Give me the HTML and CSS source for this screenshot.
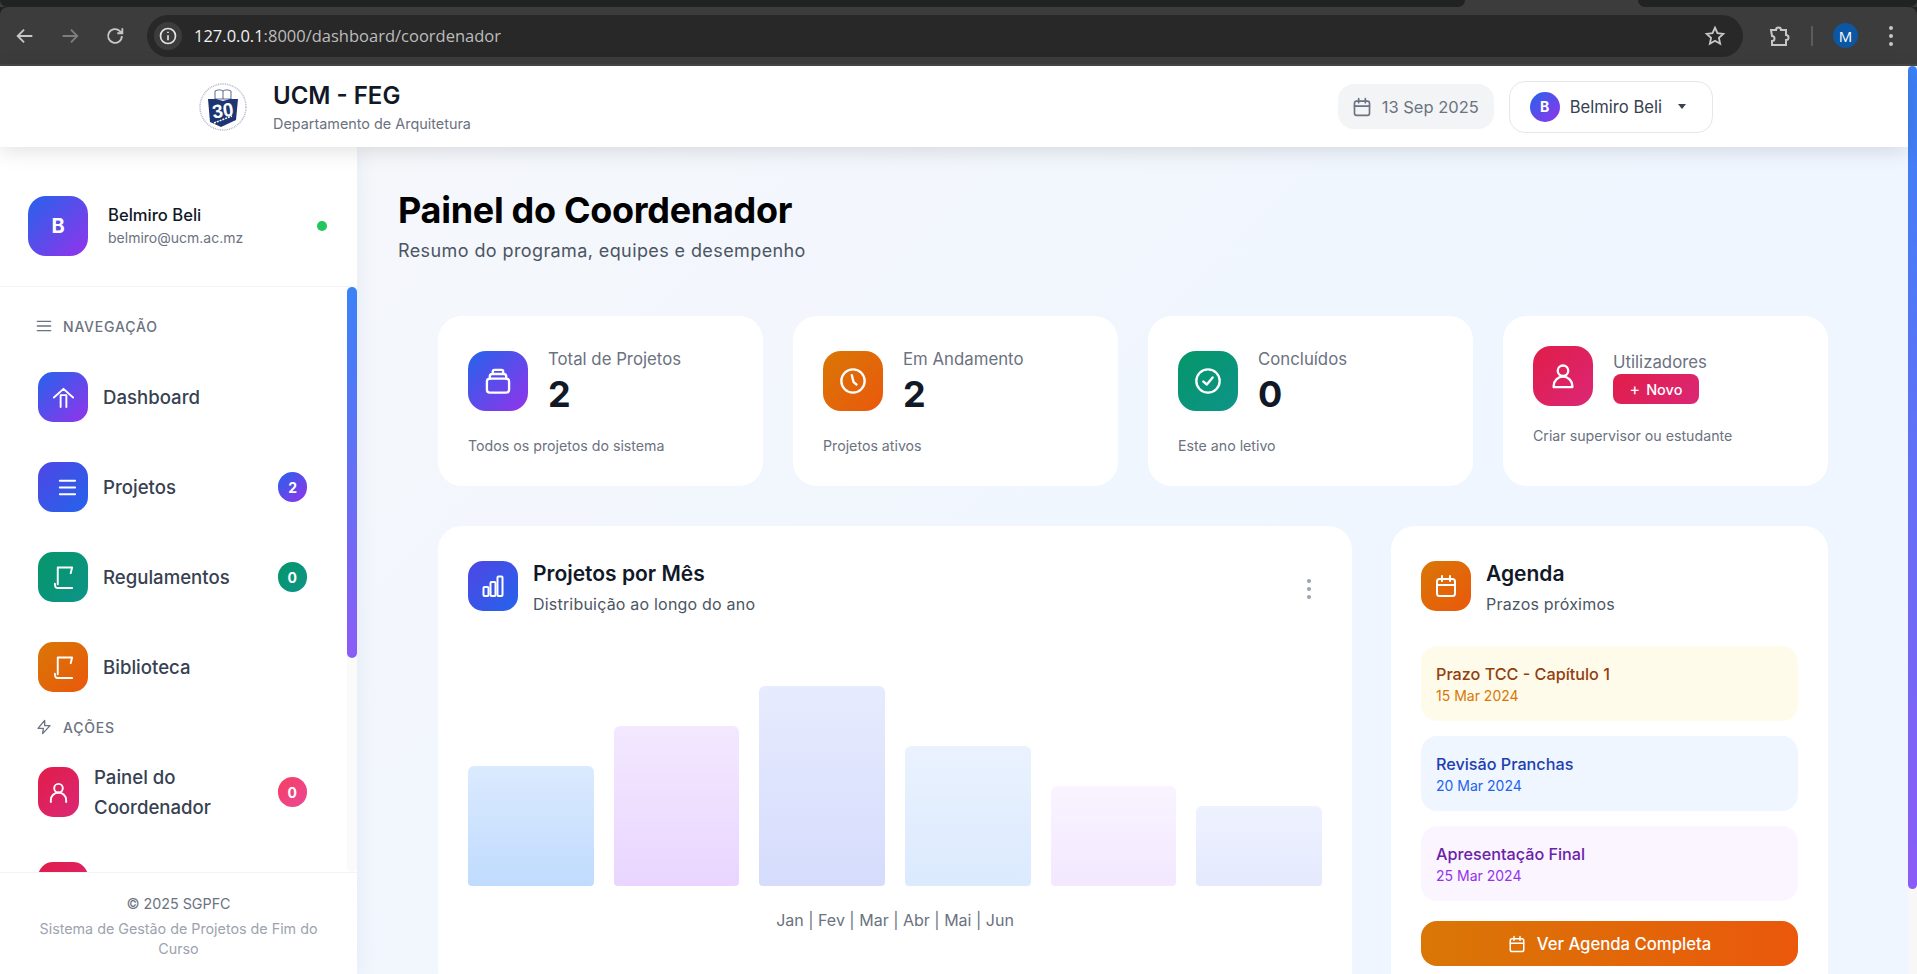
FILE: index.html
```html
<!DOCTYPE html>
<html lang="pt">

<head>
    <meta charset="UTF-8">
    <meta name="viewport" content="width=device-width, initial-scale=1.0">
    <title>Painel do Coordenador</title>
    <link rel="stylesheet" href="styles.css">
</head>

<body>
    <svg class="sprite" aria-hidden="true">
        <symbol id="i-calendar" viewBox="0 0 24 24"><rect x="3" y="5" width="18" height="17" rx="2.5" /><path d="M8 2v5M16 2v5M3 11h18" /></symbol>
        <symbol id="i-user" viewBox="0 0 24 24"><circle cx="12" cy="7.5" r="4.5" /><path d="M4 21.5v-1a8 8 0 0 1 16 0v1z" /></symbol>
        <symbol id="i-book" viewBox="0 0 24 24"><path d="M6 1.500h15l-1.500 6M6 1.500V19M3 18.500c0 3 1 4.500 3 4.500h15" /></symbol>
    </svg>

    <div class="browser-bar">
        <div class="tab-strip">
            <div class="tab-dark tab-dark-left"></div>
            <div class="tab-dark tab-dark-right"></div>
        </div>
        <div class="toolbar">
            <svg class="tool-icon" viewBox="0 0 24 24"><path d="M20 12H5M11 5l-7 7 7 7" /></svg>
            <svg class="tool-icon tool-icon-off" viewBox="0 0 24 24"><path d="M4 12h15M13 5l7 7-7 7" /></svg>
            <svg class="tool-icon" viewBox="0 0 24 24"><path d="M19.500 12a7.500 7.500 0 1 1-2.200-5.300L20 9M20 3.500V9h-5.500" /></svg>
            <div class="omnibox">
                <span class="site-info">
                    <svg viewBox="0 0 24 24"><circle cx="12" cy="12" r="9" /><path d="M12 11v6M12 7v1.500" /></svg>
                </span>
                <span class="url"><span class="url-host">127.0.0.1</span>:8000/dashboard/coordenador</span>
                <svg class="tool-icon star" viewBox="0 0 24 24"><path d="M12 3l2.700 6 6.300.7-4.700 4.300 1.300 6.500-5.600-3.300-5.600 3.300 1.300-6.500L3 9.700 9.300 9z" /></svg>
            </div>
            <svg class="tool-icon ext" viewBox="0 0 24 24"><path d="M4 6h5a2.500 2.500 0 0 1 5 0h5v5a2.500 2.500 0 0 1 0 5v5H5v-4a2 2 0 0 0 0-5z" /></svg>
            <span class="tool-divider"></span>
            <span class="profile">M</span>
            <span class="tool-kebab"><i></i><i></i><i></i></span>
        </div>
    </div>

    <div class="viewport">
        <div class="app">
            <header class="topbar">
                <div class="brand">
                    <svg class="logo" viewBox="0 0 48 50">
                        <circle class="logo-ring" cx="24" cy="25" r="23" />
                        <path class="logo-book" d="M16 9c3-1.500 6-1.500 8 0 2-1.500 5-1.500 8 0v8H16zM24 9v8" />
                        <path class="logo-shield" d="M9 17h8l7 2 7-2h8l-2 21-15 7-11-5z" />
                        <text class="logo-num" x="24" y="35" text-anchor="middle" transform="rotate(-8 24 30)">30</text>
                        <path class="logo-band" d="M15 41l18-7" />
                    </svg>
                    <div class="brand-text">
                        <div class="brand-title">UCM - FEG</div>
                        <div class="brand-sub">Departamento de Arquitetura</div>
                    </div>
                </div>
                <div class="topbar-right">
                    <div class="date-pill">
                        <svg class="line-icon date-icon"><use href="#i-calendar" /></svg>
                        <span>13 Sep 2025</span>
                    </div>
                    <div class="user-btn">
                        <span class="user-btn-avatar">B</span>
                        <span>Belmiro Beli</span>
                        <span class="caret"></span>
                    </div>
                </div>
            </header>

            <div class="layout">
                <aside class="sidebar">
                    <div class="side-user">
                        <div class="side-avatar">B</div>
                        <div>
                            <div class="side-name">Belmiro Beli</div>
                            <div class="side-mail">belmiro@ucm.ac.mz</div>
                        </div>
                        <span class="online-dot"></span>
                    </div>

                    <div class="side-scroll">
                        <nav class="side-nav">
                            <div class="nav-label">
                                <svg class="line-icon" viewBox="0 0 24 24"><path d="M2 5h20M2 12h20M2 19h20" /></svg>
                                <span>Navegação</span>
                            </div>
                            <a class="nav-item">
                                <span class="nav-icon grad-brand">
                                    <svg class="line-icon" viewBox="0 0 24 24"><path d="M2 12L12 3l10 9M9 9.500V22M15 9.500V22M9 9.500h6" /></svg>
                                </span>
                                <span class="nav-text">Dashboard</span>
                            </a>
                            <a class="nav-item">
                                <span class="nav-icon grad-indigo">
                                    <svg class="line-icon nudge" viewBox="0 0 24 24"><path d="M5 5h16M5 12h16M5 19h16" /></svg>
                                </span>
                                <span class="nav-text">Projetos</span>
                                <span class="nav-badge grad-brand">2</span>
                            </a>
                            <a class="nav-item">
                                <span class="nav-icon grad-green">
                                    <svg class="line-icon"><use href="#i-book" /></svg>
                                </span>
                                <span class="nav-text">Regulamentos</span>
                                <span class="nav-badge grad-green">0</span>
                            </a>
                            <a class="nav-item">
                                <span class="nav-icon grad-orange">
                                    <svg class="line-icon"><use href="#i-book" /></svg>
                                </span>
                                <span class="nav-text">Biblioteca</span>
                            </a>

                            <div class="nav-label nav-label-actions">
                                <svg class="line-icon" viewBox="0 0 24 24"><path d="M13 2L3 14h8l-1 8 11-12h-8z" /></svg>
                                <span>Ações</span>
                            </div>
                            <a class="nav-item nav-item-tall">
                                <span class="nav-icon nav-icon-narrow grad-pink">
                                    <svg class="line-icon" viewBox="0 0 24 24"><circle cx="12" cy="7.500" r="4.500" /><path d="M4 22v-2a8 8 0 0 1 16 0v2" /></svg>
                                </span>
                                <span class="nav-text">Painel do Coordenador</span>
                                <span class="nav-badge grad-rose">0</span>
                            </a>
                            <a class="nav-item">
                                <span class="nav-icon grad-pink"></span>
                            </a>
                        </nav>
                        <div class="side-track"><div class="side-thumb"></div></div>
                    </div>

                    <footer class="side-footer">
                        <div class="side-copy">© 2025 SGPFC</div>
                        <div class="side-system">Sistema de Gestão de Projetos de Fim do Curso</div>
                    </footer>
                </aside>

                <main class="main">
                    <h1 class="page-title">Painel do Coordenador</h1>
                    <p class="page-sub">Resumo do programa, equipes e desempenho</p>

                    <section class="stats">
                        <div class="stat-card">
                            <div class="stat-head">
                                <span class="stat-icon grad-brand">
                                    <svg class="line-icon" viewBox="0 0 24 24"><rect x="2.500" y="10" width="19" height="12" rx="2.500" /><path d="M5 10V8a2 2 0 0 1 2-2h10a2 2 0 0 1 2 2v2M7.500 6V4a1.500 1.500 0 0 1 1.500-1.500h6A1.500 1.500 0 0 1 16.500 4v2" /></svg>
                                </span>
                                <div class="stat-body">
                                    <div class="stat-label">Total de Projetos</div>
                                    <div class="stat-num">2</div>
                                </div>
                            </div>
                            <div class="stat-note">Todos os projetos do sistema</div>
                        </div>
                        <div class="stat-card">
                            <div class="stat-head">
                                <span class="stat-icon grad-orange">
                                    <svg class="line-icon" viewBox="0 0 24 24"><circle cx="12" cy="12" r="10" /><path d="M11 7l1.500 6 2.500 2" /></svg>
                                </span>
                                <div class="stat-body">
                                    <div class="stat-label">Em Andamento</div>
                                    <div class="stat-num">2</div>
                                </div>
                            </div>
                            <div class="stat-note">Projetos ativos</div>
                        </div>
                        <div class="stat-card">
                            <div class="stat-head">
                                <span class="stat-icon grad-green">
                                    <svg class="line-icon" viewBox="0 0 24 24"><circle cx="12" cy="12" r="10" /><path d="M8 12.500l3 2.500 5-6" /></svg>
                                </span>
                                <div class="stat-body">
                                    <div class="stat-label">Concluídos</div>
                                    <div class="stat-num">0</div>
                                </div>
                            </div>
                            <div class="stat-note">Este ano letivo</div>
                        </div>
                        <div class="stat-card">
                            <div class="stat-head stat-head-action">
                                <span class="stat-icon grad-pink">
                                    <svg class="line-icon"><use href="#i-user" /></svg>
                                </span>
                                <div class="stat-body">
                                    <div class="stat-label">Utilizadores</div>
                                    <a class="new-btn"><span class="new-plus">+</span> Novo</a>
                                </div>
                            </div>
                            <div class="stat-note">Criar supervisor ou estudante</div>
                        </div>
                    </section>

                    <section class="panels">
                        <div class="panel">
                            <div class="panel-head">
                                <span class="panel-icon grad-indigo">
                                    <svg class="line-icon" viewBox="0 0 24 24"><rect x="2.500" y="13" width="5" height="9" rx="1" /><rect x="9.500" y="8" width="5" height="14" rx="1" /><rect x="16.500" y="2.500" width="5" height="19.500" rx="1" /></svg>
                                </span>
                                <div>
                                    <h3 class="panel-title">Projetos por Mês</h3>
                                    <div class="panel-sub">Distribuição ao longo do ano</div>
                                </div>
                                <span class="panel-kebab"><i></i><i></i><i></i></span>
                            </div>
                            <div class="bars">
                                <div class="bar bar-1" style="height: 120px"></div>
                                <div class="bar bar-2" style="height: 160px"></div>
                                <div class="bar bar-3" style="height: 200px"></div>
                                <div class="bar bar-4" style="height: 140px"></div>
                                <div class="bar bar-5" style="height: 100px"></div>
                                <div class="bar bar-6" style="height: 80px"></div>
                            </div>
                            <div class="bar-months">Jan | Fev | Mar | Abr | Mai | Jun</div>
                        </div>

                        <div class="panel">
                            <div class="panel-head">
                                <span class="panel-icon grad-orange">
                                    <svg class="line-icon"><use href="#i-calendar" /></svg>
                                </span>
                                <div>
                                    <h3 class="panel-title">Agenda</h3>
                                    <div class="panel-sub">Prazos próximos</div>
                                </div>
                            </div>
                            <div class="agenda">
                                <div class="agenda-item agenda-amber">
                                    <div class="agenda-title">Prazo TCC - Capítulo 1</div>
                                    <div class="agenda-date">15 Mar 2024</div>
                                </div>
                                <div class="agenda-item agenda-blue">
                                    <div class="agenda-title">Revisão Pranchas</div>
                                    <div class="agenda-date">20 Mar 2024</div>
                                </div>
                                <div class="agenda-item agenda-purple">
                                    <div class="agenda-title">Apresentação Final</div>
                                    <div class="agenda-date">25 Mar 2024</div>
                                </div>
                            </div>
                            <a class="agenda-btn">
                                <svg class="line-icon"><use href="#i-calendar" /></svg>
                                Ver Agenda Completa
                            </a>
                        </div>
                    </section>
                </main>
            </div>
        </div>

        <div class="page-track"><div class="page-thumb"></div></div>
    </div>
</body>

</html>
```

FILE: styles.css
```css
* {
    box-sizing: border-box;
}

html,
body {
    height: 974px;
    margin: 0;
    overflow: hidden;
}

body {
    font-family: Inter, 'Noto Sans', sans-serif;
    color: #111827;
    background: #fff;
}

.sprite {
    display: none;
}

.line-icon {
    fill: none;
    stroke: #fff;
    stroke-width: 2;
    stroke-linecap: round;
    stroke-linejoin: round;
}

/* browser window */

.browser-bar {
    height: 66px;
    background: #202124;
    font-family: 'Open Sans', sans-serif;
}

.tab-strip {
    height: 7px;
    background: #3c3c3c;
    display: flex;
    justify-content: space-between;
}

.tab-dark {
    height: 7px;
    background: #202322;
    border-radius: 0 0 8px 8px;
}

.tab-dark-left {
    width: 1465px;
}

.tab-dark-right {
    width: 279px;
}

.toolbar {
    height: 59px;
    background: #3c3c3c;
    border-bottom: 2px solid #474747;
    border-radius: 8px 8px 0 0;
    display: flex;
    align-items: center;
    padding-left: 14px;
}

.tool-icon {
    width: 22px;
    height: 22px;
    margin-right: 23px;
    flex: none;
    fill: none;
    stroke: #c7c7c7;
    stroke-width: 2;
}

.tool-icon-off {
    stroke: #7d7d7d;
}

.omnibox {
    width: 1596px;
    height: 42px;
    margin-left: -2px;
    border-radius: 21px;
    background: #282828;
    display: flex;
    align-items: center;
    padding-left: 7px;
    flex: none;
}

.site-info {
    width: 28px;
    height: 28px;
    border-radius: 50%;
    background: #3c3c3c;
    display: flex;
    align-items: center;
    justify-content: center;
}

.site-info svg {
    width: 20px;
    height: 20px;
    fill: none;
    stroke: #e3e3e3;
    stroke-width: 2;
}

.url {
    margin-left: 12px;
    flex: 1;
    font-size: 16.5px;
    color: #bdbdbd;
}

.url-host {
    color: #f0f0f0;
}

.star {
    margin-right: 17px;
}

.ext {
    margin: 0 0 0 24px;
    width: 24px;
    height: 24px;
}

.tool-divider {
    width: 2px;
    height: 20px;
    margin-left: 20px;
    background: #5c5c5c;
}

.profile {
    width: 25px;
    height: 25px;
    margin-left: 20px;
    border-radius: 50%;
    background: #0b57a4;
    color: #fff;
    font-size: 15px;
    display: flex;
    align-items: center;
    justify-content: center;
}

.tool-kebab {
    margin-left: 31px;
    display: flex;
    flex-direction: column;
    gap: 4px;
}

.tool-kebab i {
    width: 4px;
    height: 4px;
    border-radius: 50%;
    background: #c7c7c7;
}

/* page shell */

.viewport {
    height: 908px;
    display: flex;
}

.app {
    flex: 1;
    min-width: 0;
    display: flex;
    flex-direction: column;
}

.page-track {
    width: 9px;
    background: #f7f7f7;
}

.page-thumb {
    height: 823px;
    background: linear-gradient(180deg, #3b82f6, #8b5cf6);
    border-radius: 5px;
}

.topbar {
    height: 81px;
    flex: none;
    background: #fff;
    box-shadow: 0 4px 20px rgba(0, 0, 0, 0.12);
    position: relative;
    z-index: 2;
    display: flex;
    align-items: center;
    justify-content: space-between;
    padding: 0 195px 0 199px;
}

.brand {
    display: flex;
    align-items: center;
    gap: 26px;
}

.brand-text {
    padding-top: 2px;
}

.logo {
    width: 48px;
    height: 50px;
}

.logo-ring {
    fill: none;
    stroke: #b4bccd;
    stroke-width: 1.500;
    stroke-dasharray: 1 0.800;
}

.logo-book {
    fill: #fff;
    stroke: #33457a;
    stroke-width: 0.800;
}

.logo-shield {
    fill: #1e3574;
}

.logo-num {
    font-family: 'Liberation Sans', sans-serif;
    font-size: 19px;
    font-weight: 700;
    fill: #fff;
}

.logo-band {
    stroke: #fff;
    stroke-width: 1.500;
    stroke-dasharray: 2 1;
}

.brand-title {
    font-size: 24px;
    font-weight: 600;
    line-height: 30px;
}

.brand-sub {
    font-size: 14.4px;
    line-height: 20px;
    margin-top: 3px;
    color: #6b7280;
}

.topbar-right {
    display: flex;
    align-items: center;
    gap: 15px;
}

.date-pill {
    height: 45px;
    padding: 0 15px 0 14px;
    display: flex;
    align-items: center;
    gap: 10px;
    border-radius: 16px;
    background: #f3f4f6;
    font-size: 16.5px;
    color: #6b7280;
}

.date-icon {
    width: 20px;
    height: 20px;
    stroke: #6b7280;
}

.user-btn {
    height: 52px;
    padding: 0 26px 0 20px;
    display: flex;
    align-items: center;
    gap: 10px;
    border: 1px solid #e5e7eb;
    border-radius: 16px;
    font-size: 16.6px;
    color: #374151;
}

.user-btn-avatar {
    width: 30px;
    height: 30px;
    border-radius: 50%;
    background: linear-gradient(135deg, #2563eb, #9333ea);
    color: #fff;
    font-size: 14px;
    font-weight: 700;
    display: flex;
    align-items: center;
    justify-content: center;
}

.caret {
    margin-left: 6px;
    border-top: 5px solid #374151;
    border-left: 4px solid transparent;
    border-right: 4px solid transparent;
}

.layout {
    flex: 1;
    min-height: 0;
    display: flex;
}

/* gradients shared by icons and badges */

.grad-brand {
    background: linear-gradient(135deg, #2563eb, #9333ea);
}

.grad-indigo {
    background: linear-gradient(135deg, #4f46e5, #2563eb);
}

.grad-green {
    background: linear-gradient(135deg, #059669, #0d9488);
}

.grad-orange {
    background: linear-gradient(135deg, #d97706, #ea580c);
}

.grad-pink {
    background: linear-gradient(135deg, #e11d48, #db2777);
}

.grad-rose {
    background: linear-gradient(135deg, #f43f5e, #ec4899);
}

/* sidebar */

.sidebar {
    width: 357px;
    flex: none;
    background: #fff;
    box-shadow: 0 0 20px rgba(37, 70, 140, 0.08);
    position: relative;
    z-index: 1;
    display: flex;
    flex-direction: column;
}

.side-user {
    flex: none;
    padding: 49px 30px 30px 28px;
    border-bottom: 1px solid #f3f4f6;
    display: flex;
    align-items: center;
    gap: 20px;
}

.side-avatar {
    width: 60px;
    height: 60px;
    border-radius: 18px;
    background: linear-gradient(135deg, #2563eb, #9333ea);
    color: #fff;
    font-size: 20px;
    font-weight: 700;
    display: flex;
    align-items: center;
    justify-content: center;
}

.side-name {
    font-size: 16.6px;
    font-weight: 500;
    line-height: 22px;
}

.side-mail {
    font-size: 14px;
    line-height: 20px;
    margin-top: 2px;
    color: #6b7280;
}

.online-dot {
    width: 10px;
    height: 10px;
    margin-left: auto;
    border-radius: 50%;
    background: #22c55e;
}

.side-scroll {
    flex: 1;
    min-height: 0;
    display: flex;
    overflow: hidden;
}

.side-nav {
    flex: 1;
    padding: 29px 40px 0 36px;
}

.nav-label {
    height: 20px;
    margin-bottom: 36px;
    display: flex;
    align-items: center;
    gap: 11px;
    font-size: 14px;
    font-weight: 500;
    letter-spacing: 0.8px;
    text-transform: uppercase;
    color: #6b7280;
}

.nav-label svg {
    width: 16px;
    height: 16px;
    stroke: #6b7280;
}

.nav-label-actions {
    margin-top: -15px;
    margin-bottom: 25px;
}

.nav-item {
    min-height: 50px;
    margin: 0 0 40px 2px;
    display: flex;
    align-items: center;
    gap: 15px;
}

.nav-item-tall {
    height: 60px;
}

.nav-icon {
    width: 50px;
    height: 50px;
    flex: none;
    border-radius: 15px;
    display: flex;
    align-items: center;
    justify-content: center;
}

.nav-icon svg {
    width: 23px;
    height: 23px;
}

.nav-icon .nudge {
    margin-left: 6px;
}

.nav-icon-narrow {
    width: 41px;
}

.nav-text {
    flex: 1;
    font-size: 18.6px;
    font-weight: 500;
    line-height: 30px;
    color: #374151;
}

.nav-badge {
    height: 30px;
    min-width: 28px;
    padding: 0 10px;
    border-radius: 15px;
    color: #fff;
    font-size: 14px;
    font-weight: 700;
    display: flex;
    align-items: center;
    justify-content: center;
}

.side-track {
    width: 10px;
    flex: none;
    background: #fafafa;
    border-radius: 0 0 6px 6px;
}

.side-thumb {
    height: 371px;
    background: linear-gradient(180deg, #3b82f6, #8b5cf6);
    border-radius: 5px;
}

.side-footer {
    height: 102px;
    flex: none;
    padding: 21px 30px 0 30px;
    border-top: 1px solid #f3f4f6;
    text-align: center;
    font-size: 14.3px;
    line-height: 20px;
}

.side-copy {
    color: #6b7280;
}

.side-system {
    margin-top: 5px;
    color: #9ca3af;
}

/* main */

.main {
    flex: 1;
    min-width: 0;
    overflow: hidden;
    padding: 41px 40px 0 41px;
    background: linear-gradient(135deg, #f5f7fb, #eff6ff 60%);
}

.page-title {
    margin: 0;
    font-size: 36px;
    font-weight: 700;
    line-height: 44px;
    letter-spacing: -0.3px;
    color: #000;
}

.page-sub {
    margin: 5px 0 51px;
    font-size: 18px;
    line-height: 28px;
    letter-spacing: 0.4px;
    color: #4b5563;
}

.stats {
    margin: 0 40px 40px;
    display: grid;
    grid-template-columns: repeat(4, 1fr);
    gap: 30px;
}

.stat-card {
    height: 170px;
    padding: 30px;
    border-radius: 24px;
    background: #fff;
}

.stat-head {
    padding-top: 5px;
    margin-bottom: 22px;
    display: flex;
    gap: 20px;
}

.stat-head-action {
    padding-top: 0;
    margin-bottom: 20px;
}

.stat-head-action .stat-body {
    margin-top: 6px;
}

.stat-icon {
    width: 60px;
    height: 60px;
    flex: none;
    border-radius: 18px;
    display: flex;
    align-items: center;
    justify-content: center;
}

.stat-icon svg {
    width: 28px;
    height: 28px;
}

.stat-body {
    margin-top: -2px;
}

.stat-label {
    font-size: 16.8px;
    line-height: 20px;
    color: #6b7280;
}

.stat-num {
    margin-top: 5px;
    font-size: 36px;
    font-weight: 700;
    line-height: 40px;
}

.stat-note {
    font-size: 14.2px;
    line-height: 20px;
    color: #6b7280;
}

.new-btn {
    width: 86px;
    height: 30px;
    margin-top: 2px;
    border-radius: 8px;
    background: linear-gradient(135deg, #e11d48, #db2777);
    color: #fff;
    font-size: 14.5px;
    font-weight: 500;
    display: flex;
    align-items: center;
    justify-content: center;
    gap: 6px;
}

.new-plus {
    font-weight: 400;
    font-size: 16px;
}

.panels {
    margin: 0 40px;
    display: grid;
    grid-template-columns: 1fr 437px;
    gap: 39px;
}

.panel {
    height: 500px;
    padding: 35px 30px;
    border-radius: 24px;
    background: #fff;
}

.panel-head {
    display: flex;
    gap: 15px;
}

.panel-icon {
    width: 50px;
    height: 50px;
    flex: none;
    border-radius: 15px;
    display: flex;
    align-items: center;
    justify-content: center;
}

.panel-icon svg {
    width: 24px;
    height: 24px;
}

.panel-title {
    margin: 0;
    font-size: 21px;
    font-weight: 600;
    line-height: 26px;
}

.panel-sub {
    margin-top: 5px;
    font-size: 16px;
    line-height: 24px;
    letter-spacing: 0.2px;
    color: #4b5563;
}

.panel-kebab {
    margin: 18px 11px 0 auto;
    display: flex;
    flex-direction: column;
    gap: 4px;
}

.panel-kebab i {
    width: 4px;
    height: 4px;
    border-radius: 50%;
    background: #9ca3af;
}

.bars {
    height: 200px;
    margin-top: 70px;
    display: flex;
    align-items: flex-end;
    gap: 20px;
}

.bar {
    flex: 1;
    border-radius: 6px 6px 4px 4px;
}

.bar-1 {
    background: linear-gradient(180deg, #dbeafe, #bfdbfe);
}

.bar-2 {
    background: linear-gradient(180deg, #f3e8ff, #e9d5ff);
}

.bar-3 {
    background: linear-gradient(180deg, #e7ebfe, #d5dcfc);
}

.bar-4 {
    background: linear-gradient(180deg, #eaf2fe, #dbeafe);
}

.bar-5 {
    background: linear-gradient(180deg, #f9f4ff, #f3e8ff);
}

.bar-6 {
    background: linear-gradient(180deg, #eef2ff, #e4e9fd);
}

.bar-months {
    margin-top: 22px;
    text-align: center;
    font-size: 16px;
    line-height: 24px;
    color: #6b7280;
}

.agenda {
    margin-top: 30px;
    display: flex;
    flex-direction: column;
    gap: 15px;
}

.agenda-item {
    height: 75px;
    padding: 17px 15px 15px;
    border-radius: 16px;
}

.agenda-title {
    font-size: 16.2px;
    font-weight: 500;
    line-height: 22px;
}

.agenda-date {
    margin-top: 1px;
    font-size: 14px;
    line-height: 20px;
}

.agenda-amber {
    background: #fffbeb;
}

.agenda-amber .agenda-title {
    color: #92400e;
}

.agenda-amber .agenda-date {
    color: #d97706;
}

.agenda-blue {
    background: #eff6ff;
}

.agenda-blue .agenda-title {
    color: #1e40af;
}

.agenda-blue .agenda-date {
    color: #2563eb;
}

.agenda-purple {
    background: #faf5ff;
}

.agenda-purple .agenda-title {
    color: #6b21a8;
}

.agenda-purple .agenda-date {
    color: #9333ea;
}

.agenda-btn {
    height: 45px;
    margin-top: 20px;
    border-radius: 16px;
    background: linear-gradient(90deg, #d97706, #ea580c);
    color: #fff;
    font-size: 16.7px;
    font-weight: 500;
    display: flex;
    align-items: center;
    justify-content: center;
    gap: 11px;
}

.agenda-btn svg {
    width: 18px;
    height: 18px;
}
```
